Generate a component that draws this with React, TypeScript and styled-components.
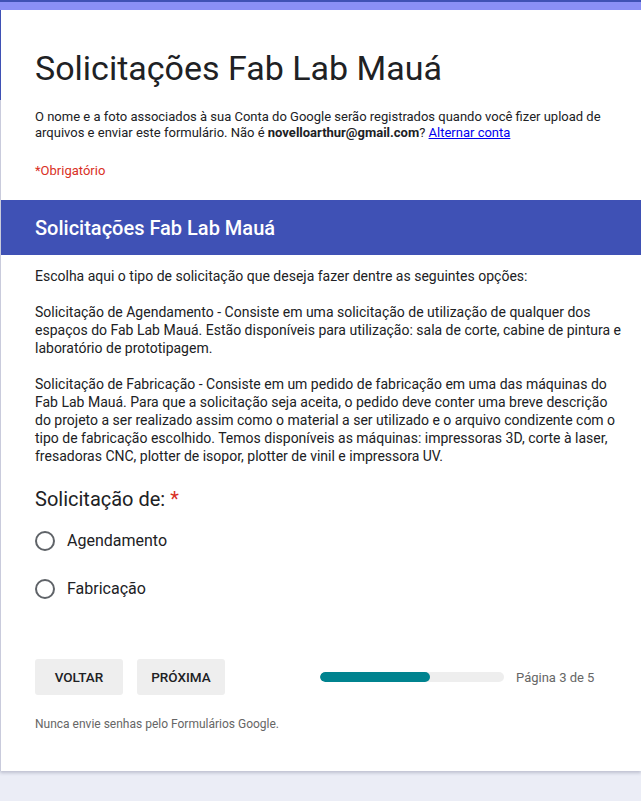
import React from "react";
import styled, { createGlobalStyle } from "styled-components";

const Global = createGlobalStyle`
  html, body { margin: 0; padding: 0; background: #ebedf6; }
  body { font-family: Roboto, "Noto Sans", Arial, sans-serif; color: #202124; }
  * { box-sizing: border-box; }
`;

const Page = styled.div`
  width: 641px;
  min-height: 801px;
  background: #ebedf6;
`;

const Card = styled.div`
  background: #fff;
  border-top: 2px solid #3f51b5;
  box-shadow: 0 2px 3px rgba(60, 64, 100, 0.25);
`;

const TopBand = styled.div`
  height: 8px;
  background: #8a8ff6;
`;

const Header = styled.div`
  border-left: 1px solid #3f51b5;
  padding: 38px 16px 0 34px;
  height: 90px;
`;

const Title = styled.h1`
  margin: 0;
  font-size: 34px;
  font-weight: 400;
  line-height: 40px;
  color: #202124;
`;

const Body = styled.div`
  border-left: 1px solid #c9cbdc;
`;

const Inner = styled.div`
  padding: 0 16px 0 34px;
`;

const Notice = styled.p`
  margin: 0;
  padding-top: 9px;
  font-size: 13px;
  line-height: 16px;
  color: #202124;
  b { font-weight: 700; }
  a { color: #0000ee; text-decoration: underline; }
`;

const Required = styled.div`
  color: #d93025;
  font-size: 13px;
  line-height: 16px;
  margin-top: 22px;
  padding-bottom: 21px;
`;

const SectionBar = styled.div`
  background: #3f51b5;
  height: 55px;
  display: flex;
  align-items: center;
  padding-left: 34px;
  color: #fff;
  font-size: 20px;
  font-weight: 500;
`;

const Description = styled.div`
  padding: 12px 16px 0 34px;
  font-size: 14px;
  line-height: 18px;
  white-space: pre-wrap;
  color: #202124;
`;

const Question = styled.div`
  padding: 22px 16px 0 34px;
`;

const QTitle = styled.div`
  font-size: 20px;
  line-height: 24px;
  color: #202124;
  span { color: #d93025; margin-left: 5px; }
`;

const Options = styled.div`
  display: flex;
  flex-direction: column;
  gap: 28px;
  margin-top: 20px;
`;

const Option = styled.label`
  display: flex;
  align-items: center;
  gap: 12px;
  font-size: 16px;
  line-height: 20px;
  color: #202124;
`;

const Radio = styled.span`
  width: 20px;
  height: 20px;
  border: 2px solid #5f6368;
  border-radius: 50%;
  flex: none;
`;

const Footer = styled.div`
  display: flex;
  align-items: center;
  padding: 60px 16px 0 34px;
`;

const Button = styled.button<{ $gap?: number }>`
  width: 88px;
  height: 36px;
  padding: 0;
  margin-right: ${(p) => p.$gap ?? 0}px;
  border: none;
  border-radius: 3px;
  background: #eeeeee;
  font-family: inherit;
  font-size: 13.5px;
  font-weight: 500;
  color: #202124;
  text-align: center;
`;

const Progress = styled.div`
  display: flex;
  align-items: center;
  margin-left: 95px;
  gap: 12px;
`;

const Track = styled.div`
  width: 184px;
  height: 10px;
  border-radius: 5px;
  background: #eeeeee;
  overflow: hidden;
`;

const Fill = styled.div`
  height: 100%;
  border-radius: 5px;
  background: #00838f;
`;

const PageLabel = styled.span`
  font-size: 13px;
  color: #666;
`;

const Fine = styled.div`
  padding: 22px 16px 40px 34px;
  font-size: 12px;
  line-height: 14px;
  color: #666;
`;

const desc = `Escolha aqui o tipo de solicitação que deseja fazer dentre as seguintes opções:

Solicitação de Agendamento - Consiste em uma solicitação de utilização de qualquer dos espaços do Fab Lab Mauá. Estão disponíveis para utilização: sala de corte, cabine de pintura e laboratório de prototipagem.

Solicitação de Fabricação - Consiste em um pedido de fabricação em uma das máquinas do Fab Lab Mauá. Para que a solicitação seja aceita, o pedido deve conter uma breve descrição do projeto a ser realizado assim como o material a ser utilizado e o arquivo condizente com o tipo de fabricação escolhido. Temos disponíveis as máquinas: impressoras 3D, corte à laser, fresadoras CNC, plotter de isopor, plotter de vinil e impressora UV.`;

export default function App() {
  return (
    <Page>
      <Global />
      <Card>
        <TopBand />
        <Header>
          <Title>Solicitações Fab Lab Mauá</Title>
        </Header>
        <Body>
          <Inner>
            <Notice>
              O nome e a foto associados à sua Conta do Google serão registrados quando você fizer upload de
              arquivos e enviar este formulário. Não é <b>novelloarthur@gmail.com</b>? <a href="#">Alternar conta</a>
            </Notice>
            <Required>*Obrigatório</Required>
          </Inner>
          <SectionBar>Solicitações Fab Lab Mauá</SectionBar>
          <Description>{desc}</Description>
          <Question>
            <QTitle>
              Solicitação de:<span>*</span>
            </QTitle>
            <Options>
              <Option>
                <Radio />
                Agendamento
              </Option>
              <Option>
                <Radio />
                Fabricação
              </Option>
            </Options>
          </Question>
          <Footer>
            <Button $gap={14}>VOLTAR</Button>
            <Button>PRÓXIMA</Button>
            <Progress>
              <Track>
                <Fill style={{ width: "60%" }} />
              </Track>
              <PageLabel>Página 3 de 5</PageLabel>
            </Progress>
          </Footer>
          <Fine>Nunca envie senhas pelo Formulários Google.</Fine>
        </Body>
      </Card>
    </Page>
  );
}
